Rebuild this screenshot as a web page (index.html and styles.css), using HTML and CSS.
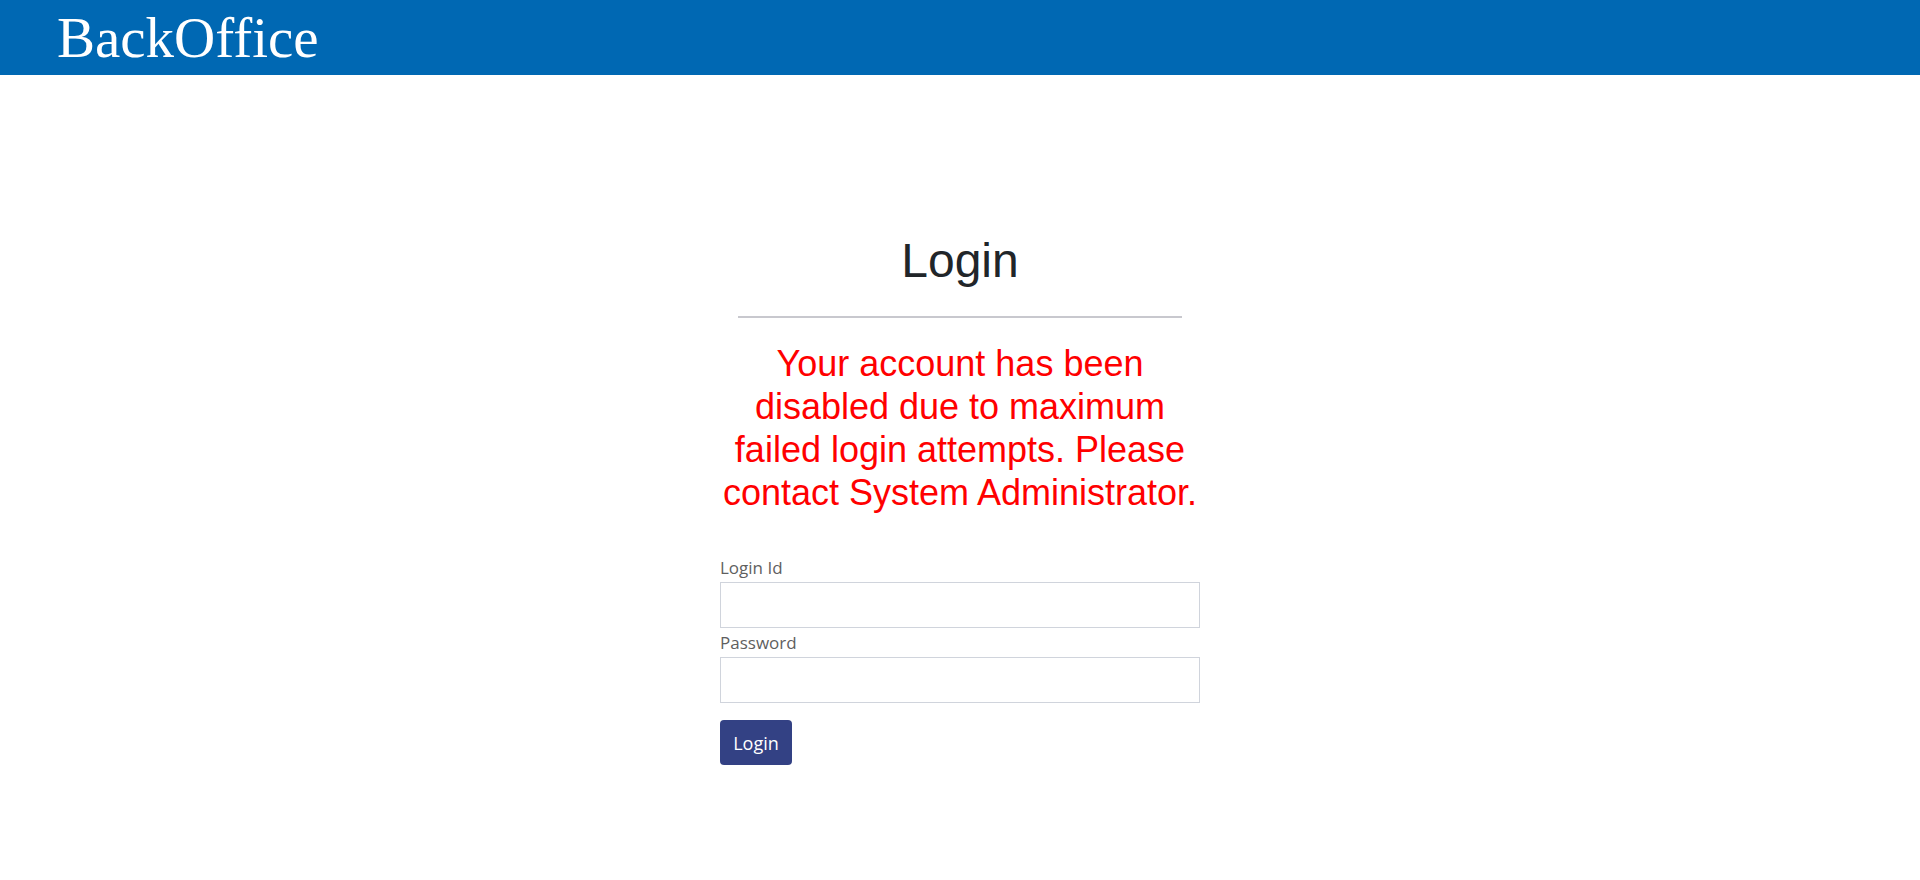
FILE: index.html
```html
<!DOCTYPE html>
<html lang="en">
<head>
<meta charset="utf-8">
<title>BackOffice - Login</title>
<link rel="stylesheet" href="styles.css">
</head>
<body>
<header class="topbar">
  <div class="brand">BackOffice</div>
</header>
<main class="login">
  <h1 class="login-title">Login</h1>
  <hr class="login-rule">
  <p class="login-error">Your account has been disabled due to maximum failed login attempts. Please contact System Administrator.</p>
  <form class="login-form">
    <label class="field-label" for="loginId">Login Id</label>
    <input class="field-input" id="loginId" type="text">
    <label class="field-label" for="password">Password</label>
    <input class="field-input" id="password" type="password">
    <button class="login-btn" type="button">Login</button>
  </form>
</main>
</body>
</html>
```
FILE: styles.css
```css
* { box-sizing: border-box; }
html, body { margin: 0; padding: 0; }
body {
  background: #ffffff;
  font-family: "Open Sans", "Noto Sans", sans-serif;
  color: #212529;
}
.topbar {
  height: 75px;
  background: #0068b3;
  padding-left: 57px;
}
.brand {
  font-family: "Liberation Serif", "Times New Roman", serif;
  font-size: 57px;
  line-height: 75px;
  color: #ffffff;
}
.login {
  width: 480px;
  margin: 0 auto;
  padding-top: 157px;
  display: flex;
  flex-direction: column;
}
.login-title {
  margin: 0;
  font-family: "Liberation Sans", Arial, sans-serif;
  font-weight: 400;
  font-size: 48px;
  line-height: 57.6px;
  text-align: center;
  color: #212529;
}
.login-rule {
  width: 444px;
  margin: 26px auto 24px;
  border: 0;
  border-top: 2px solid #c8c8ce;
  height: 0;
}
.login-error {
  margin: 0;
  font-family: "Liberation Sans", Arial, sans-serif;
  font-size: 36px;
  line-height: 1.2;
  text-align: center;
  color: #ff0000;
}
.login-form {
  margin-top: 40px;
  display: flex;
  flex-direction: column;
  align-items: flex-start;
}
.field-label {
  font-size: 17px;
  line-height: 28px;
  color: #5f5f5f;
}
.field-input {
  width: 100%;
  height: 46px;
  margin: 0 0 1px;
  border: 1px solid #d0d4dc;
  border-radius: 0;
  background: #ffffff;
  font: inherit;
}
.login-btn {
  margin-top: 16px;
  width: 72px;
  height: 45px;
  border: 0;
  border-radius: 4px;
  background: #334184;
  color: #ffffff;
  font-family: "Open Sans", "Noto Sans", sans-serif;
  font-size: 18px;
  padding: 0;
}
```
